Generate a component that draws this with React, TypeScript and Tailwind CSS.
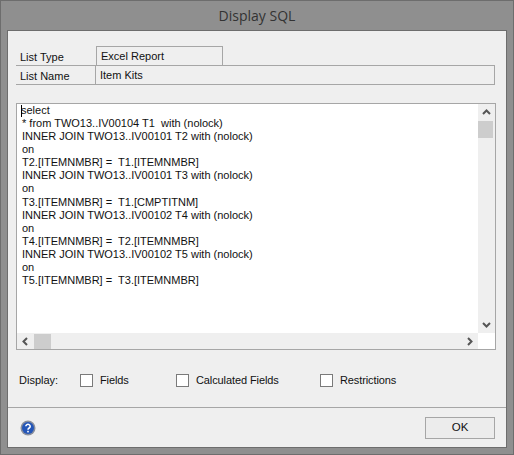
const sqlLines = [
  "select",
  "* from TWO13..IV00104 T1  with (nolock)",
  "INNER JOIN TWO13..IV00101 T2 with (nolock)",
  "on",
  "T2.[ITEMNMBR] =  T1.[ITEMNMBR]",
  "INNER JOIN TWO13..IV00101 T3 with (nolock)",
  "on",
  "T3.[ITEMNMBR] =  T1.[CMPTITNM]",
  "INNER JOIN TWO13..IV00102 T4 with (nolock)",
  "on",
  "T4.[ITEMNMBR] =  T2.[ITEMNMBR]",
  "INNER JOIN TWO13..IV00102 T5 with (nolock)",
  "on",
  "T5.[ITEMNMBR] =  T3.[ITEMNMBR]",
];

const Check = ({ label, className }: { label: string; className: string }) => (
  <div className={`flex items-center ${className}`}>
    <div className="h-[13px] w-[13px] border border-[#7a7a7a] bg-white" />
    <span className="ml-[7px] tracking-[-0.1px]">{label}</span>
  </div>
);

const Arrow = ({ d }: { d: string }) => (
  <svg width="9" height="9" viewBox="0 0 9 9">
    <path d={d} fill="none" stroke="#555" strokeWidth="2" />
  </svg>
);

export default function App() {
  return (
    <div className="h-[455px] w-[514px] overflow-hidden border border-[#6d6d6d] bg-[#8f8f8f] px-[6px] pb-[6px] font-['Liberation_Sans',sans-serif] text-[11px] text-[#111]">
      <div className="flex h-[29px] items-center justify-center font-['Open_Sans',sans-serif] text-[14px] text-[#333]">
        Display SQL
      </div>
      <div className="flex h-[418px] w-[500px] flex-col border border-[#6d6d6d] bg-[#efefef]">
        <div className="px-2 pt-[15px]">
          <div className="flex h-[19px] w-[207px]">
            <div className="w-[80px] pl-[4px] pt-[3px]">List Type</div>
            <div className="flex-1 border-x border-t border-[#a6a6a6] pl-[4px] pt-[1px]">Excel Report</div>
          </div>
          <div className="flex h-[20px] w-[479px] border-y border-r border-[#a6a6a6]">
            <div className="w-[80px] border-r border-[#a6a6a6] pl-[4px] pt-[2px]">List Name</div>
            <div className="pl-[4px] pt-[1px]">Item Kits</div>
          </div>
        </div>
        <div className="mx-2 mt-[18px] flex h-[247px] w-[480px] flex-col border border-[#a6a6a6]">
          <div className="flex min-h-0 flex-1">
            <div className="relative flex-1 bg-white pl-[4px] leading-[13.08px] whitespace-pre">
              {sqlLines.map((line, i) => (
                <div key={i} className={i === 0 ? "" : "pl-[1px]"}>
                  {line}
                </div>
              ))}
              <div className="absolute left-[4px] top-px h-[12px] w-px bg-black" />
            </div>
            <div className="flex w-[17px] flex-col bg-[#efefef]">
              <div className="flex h-[17px] items-center justify-center">
                <Arrow d="M1 6l3.5-3.5L8 6" />
              </div>
              <div className="h-[17px] w-[15px] bg-[#cdcdcd]" />
              <div className="flex-1" />
              <div className="flex h-[17px] items-center justify-center">
                <Arrow d="M1 3l3.5 3.5L8 3" />
              </div>
            </div>
          </div>
          <div className="flex h-[16px]">
            <div className="flex flex-1 items-center bg-[#efefef]">
              <div className="flex w-[17px] items-center justify-center">
                <Arrow d="M6 1L2.5 4.5 6 8" />
              </div>
              <div className="h-[15px] w-[17px] bg-[#cdcdcd]" />
              <div className="flex-1" />
              <div className="flex w-[17px] items-center justify-center">
                <Arrow d="M3 1l3.5 3.5L3 8" />
              </div>
            </div>
            <div className="w-[17px] bg-white" />
          </div>
        </div>
        <div className="flex h-[57px] items-center pl-[11px] pt-[4px]">
          <span className="w-[61px]">Display:</span>
          <Check label="Fields" className="w-[96px]" />
          <Check label="Calculated Fields" className="w-[144px]" />
          <Check label="Restrictions" className="" />
        </div>
        <div className="flex flex-1 items-center justify-between border-t border-[#a6a6a6] pl-[12px] pr-[11px]">
          <svg width="16" height="16" viewBox="0 0 16 16">
            <circle cx="8" cy="8" r="7.5" fill="#8a8f9c" />
            <circle cx="8" cy="8" r="6" fill="#2456b8" />
            <path d="M5.8 6.3a2.2 2 0 1 1 3.4 1.7c-.8.5-1.2.9-1.2 1.7" fill="none" stroke="#fff" strokeWidth="1.5" />
            <rect x="7.2" y="10.8" width="1.6" height="1.6" fill="#fff" />
          </svg>
          <div className="flex h-[22px] w-[70px] items-center justify-center border border-[#a6a6a6] bg-[#ececec] text-[11.5px]">OK</div>
        </div>
      </div>
    </div>
  );
}
